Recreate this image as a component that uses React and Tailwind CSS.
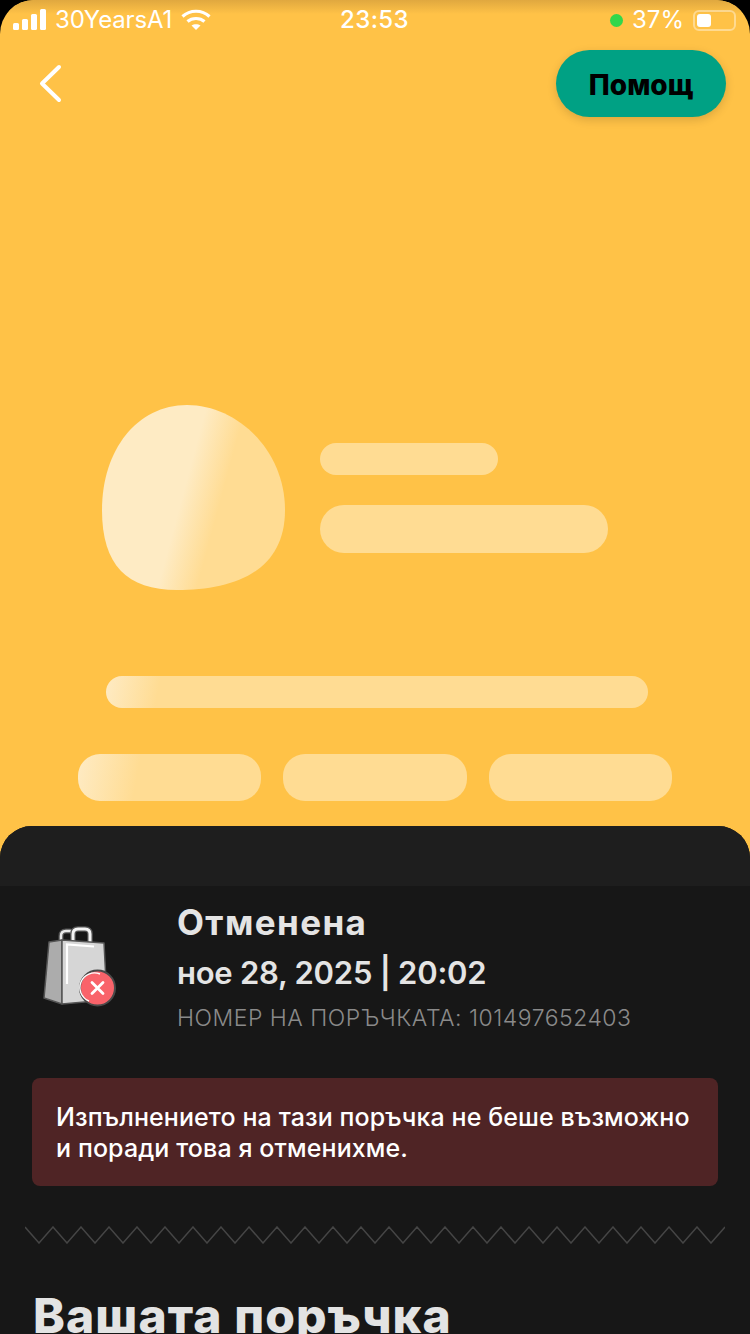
const zigzag = () => {
  let d = 'M0 1';
  for (let i = 0; i < 25; i++) {
    d += ` L${i * 28 + 14} 17 L${i * 28 + 28} 1`;
  }
  return d;
};

const StatusBar = () => (
  <div className="flex h-[40px] items-center justify-between pl-[13px] pr-[14px] text-[24px] leading-none text-white font-['Inter',sans-serif]">
    <div className="flex w-[300px] items-center">
      <svg width="34" height="22" viewBox="0 0 34 22" fill="#fff">
        <rect x="0" y="14" width="6" height="7" rx="1.5" />
        <rect x="9" y="10" width="6" height="11" rx="1.5" />
        <rect x="18" y="5" width="6" height="16" rx="1.5" />
        <rect x="27" y="0" width="6" height="21" rx="1.5" />
      </svg>
      <span className="ml-[8px] tracking-[-0.15px]">30YearsA1</span>
      <svg className="ml-[9px]" width="30" height="22" viewBox="0 0 30 22" fill="none" stroke="#fff" strokeWidth="3.2">
        <path d="M1.5 7.5 C9 0.5 21 0.5 28.5 7.5" />
        <path d="M6.5 12.5 C11 8.5 19 8.5 23.5 12.5" />
        <path d="M15 21 L10.5 16.5 C13 14.8 17 14.8 19.5 16.5 Z" fill="#fff" stroke="none" />
      </svg>
    </div>
    <span className="font-medium tracking-[0.4px]">23:53</span>
    <div className="flex w-[300px] items-center justify-end">
      <span className="h-[13px] w-[13px] rounded-full bg-[#32d74b]" />
      <span className="ml-[9px]">37%</span>
      <div className="ml-[9px] flex items-center">
        <div className="flex h-[21px] w-[43px] items-center rounded-[6px] border-2 border-white/40 p-[2px]">
          <div className="h-full w-[14px] rounded-[3px] bg-white" />
        </div>
      </div>
    </div>
  </div>
);

const Blob = () => (
  <svg width="183" height="185" viewBox="0 0 183 185">
    <defs>
      <linearGradient id="blobShine" gradientUnits="userSpaceOnUse" x1="80" y1="92" x2="117" y2="102">
        <stop offset="0" stopColor="#feebc4" />
        <stop offset="1" stopColor="#ffdc93" />
      </linearGradient>
    </defs>
    <path d="M85 0 C135 0 183 45 183 105 C183 168 130 185 75 185 C25 185 0 160 0 105 C0 45 35 0 85 0 Z" fill="url(#blobShine)" />
  </svg>
);

const Placeholder = () => (
  <div className="mt-[288px]">
    <div className="flex pl-[102px]">
      <Blob />
      <div className="ml-[35px] pt-[38px]">
        <div className="h-[32px] w-[178px] rounded-full bg-[#ffdc93]" />
        <div className="mt-[30px] h-[48px] w-[288px] rounded-full bg-[#ffdc93]" />
      </div>
    </div>
    <div className="ml-[106px] mt-[86px] h-[32px] w-[542px] rounded-[16px] bg-[linear-gradient(100deg,#feebc4_0%,#ffdc93_10%)]" />
    <div className="ml-[78px] mt-[46px] flex gap-[22px]">
      <div className="h-[47px] w-[183px] rounded-[22px] bg-[linear-gradient(100deg,#feebc4_0%,#ffdc93_33%)]" />
      <div className="h-[47px] w-[184px] rounded-[22px] bg-[#ffdc93]" />
      <div className="h-[47px] w-[183px] rounded-[22px] bg-[#ffdc93]" />
    </div>
  </div>
);

const BagIcon = () => (
  <svg width="74" height="84" viewBox="0 0 74 84" fill="none">
    <path d="M18 22 V12 Q18 7 23 7 H27 Q30 7 30 11" stroke="#555" strokeWidth="5" />
    <path d="M18 22 V12 Q18 7 23 7 H27 Q30 7 30 11" stroke="#e8e8e8" strokeWidth="2.5" />
    <path d="M30 22 V10 Q30 5 35 5 H42 Q47 5 47 10 V22" stroke="#555" strokeWidth="5.5" />
    <path d="M30 22 V10 Q30 5 35 5 H42 Q47 5 47 10 V22" stroke="#f4f4f4" strokeWidth="3" />
    <path d="M6 18 L19 16 L19 80 L1 74 Z" fill="#acacac" stroke="#555" strokeWidth="1.5" strokeLinejoin="round" />
    <path d="M19 16 L61 19 L64 76 L19 80 Z" fill="#d6d6d6" stroke="#555" strokeWidth="1.5" strokeLinejoin="round" />
    <path d="M24 60 V20.5 L51 22.5" stroke="#fff" strokeWidth="2.2" />
    <circle cx="54.5" cy="64" r="17.5" fill="#f9636a" stroke="#4a4a4a" strokeWidth="2" />
    <path d="M46 77 A14 14 0 0 1 57 50" stroke="#fff" strokeWidth="1.4" />
    <path d="M49 58.5 L60 69.5 M60 58.5 L49 69.5" stroke="#fff" strokeWidth="2.8" strokeLinecap="round" />
  </svg>
);

export default function App() {
  return (
    <div className="h-[1334px] w-[750px] overflow-hidden bg-black font-['Inter',sans-serif]">
      <div className="relative h-full overflow-hidden rounded-t-[34px] bg-[#ffc247]">
        {/* shade along the top edge of the phone */}
        <div className="absolute inset-x-0 top-0 h-[14px] bg-gradient-to-b from-[#e0a83f] to-[#ffc247]" />

        <div className="relative h-[826px]">
          <StatusBar />
          <div className="flex items-center justify-between pl-[36px] pr-[24px] pt-[10px]">
            <svg width="30" height="40" viewBox="0 0 30 40" fill="none" stroke="#fff" strokeWidth="4" strokeLinecap="round" strokeLinejoin="round">
              <path d="M23 3 L6 19.5 L23 36" />
            </svg>
            <button className="h-[67px] w-[170px] rounded-[34px] bg-[#00a184] pt-[3px] text-[28px] font-extrabold text-black shadow-[0_3px_10px_rgba(0,0,0,0.15)]">
              Помощ
            </button>
          </div>
          <Placeholder />
        </div>

        <div className="overflow-hidden rounded-t-[32px] bg-[#171717]">
          <div className="h-[60px] bg-[#1e1e1e]" />
          <div className="flex pl-[43px] pt-[17px]">
            <div className="w-[134px] pt-[21px]">
              <BagIcon />
            </div>
            <div>
              <h2 className="text-[35px] font-bold leading-[38px] tracking-[1.4px] text-[#e4e4e4]">Отменена</h2>
              <p className="mt-[13px] text-[31px] font-semibold leading-[38px] tracking-[-0.25px] text-[#e4e4e4]">ное 28, 2025 | 20:02</p>
              <p className="mt-[11px] text-[23px] font-light leading-[30px] tracking-[0.5px] text-[#8a8a8a]">НОМЕР НА ПОРЪЧКАТА: 101497652403</p>
            </div>
          </div>

          <div className="mx-[32px] mt-[45px] h-[108px] rounded-[8px] bg-[#4f2425] px-[24px] pt-[24px] text-[25px] font-medium leading-[31px] tracking-[0.1px] text-white">
            Изпълнението на тази поръчка не беше възможно<br />и поради това я отменихме.
          </div>

          <svg className="ml-[25px] mt-[40px]" width="700" height="18" viewBox="0 0 700 18" fill="none" stroke="#454545" strokeWidth="1.5">
            <path d={zigzag()} />
          </svg>

          <h1 className="ml-[33px] mt-[44px] text-[48px] font-extrabold leading-[56px] tracking-[1.1px] text-[#e3e3e3]">Вашата поръчка</h1>
        </div>
      </div>
    </div>
  );
}
